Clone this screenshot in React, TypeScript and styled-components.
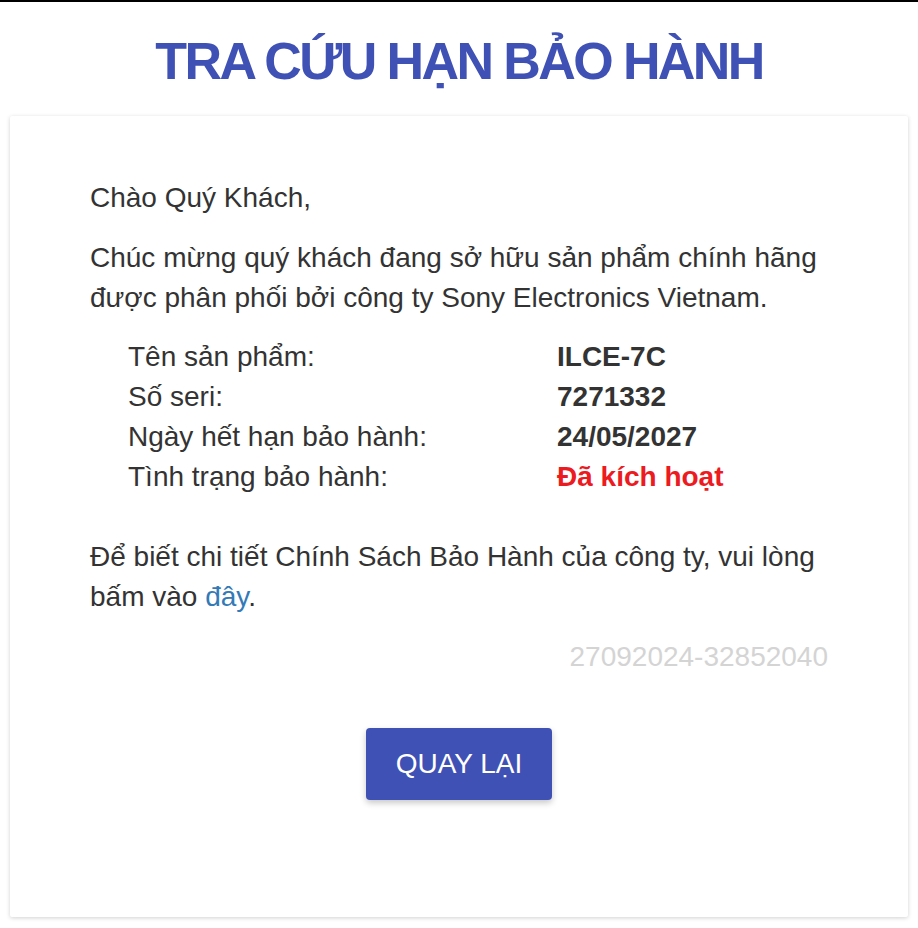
import React from "react";
import styled, { createGlobalStyle } from "styled-components";

const Global = createGlobalStyle`
  html, body { margin: 0; padding: 0; background: #fff; }
  body { font-family: "Liberation Sans", Arial, Helvetica, sans-serif; color: #333; }
`;

const Page = styled.div`
  border-top: 2px solid #000;
  padding: 0 10px 10px;
  display: flex;
  flex-direction: column;
`;

const Title = styled.h1`
  margin: 0;
  padding: 30px 0 26px;
  text-align: center;
  font-size: 52px;
  line-height: 58px;
  font-weight: 700;
  letter-spacing: -2.6px;
  color: #3f51b5;
`;

const Card = styled.div`
  background: #fff;
  box-shadow: 0 1px 4px rgba(0, 0, 0, 0.18);
  border-radius: 2px;
  padding: 62px 80px 0;
  height: 801px;
  box-sizing: border-box;
  display: flex;
  flex-direction: column;
`;

const Para = styled.p`
  margin: 0 0 20px;
  font-size: 28px;
  line-height: 40px;
`;

const InfoTable = styled.div`
  display: grid;
  grid-template-columns: 429px 1fr;
  padding-left: 38px;
  margin: -1px 0 40px;
  font-size: 28px;
  line-height: 40px;
`;

const Label = styled.div``;

const Value = styled.div<{ $red?: boolean }>`
  font-weight: 700;
  color: ${(p) => (p.$red ? "#ec1b1f" : "#333")};
`;

const Link = styled.a`
  color: #337ab7;
  text-decoration: none;
`;

const Code = styled.div`
  text-align: right;
  font-size: 28px;
  line-height: 40px;
  color: #d4d4d4;
`;

const ButtonRow = styled.div`
  display: flex;
  justify-content: center;
  margin-top: 51px;
`;

const Button = styled.button`
  width: 186px;
  height: 72px;
  border: none;
  border-radius: 4px;
  background: #3f51b5;
  color: #fff;
  font-family: "Liberation Sans", Arial, sans-serif;
  font-size: 28px;
  box-shadow: 0 3px 6px rgba(0, 0, 0, 0.22);
  cursor: pointer;
`;

export default function App() {
  return (
    <>
      <Global />
      <Page>
        <Title>TRA CỨU HẠN BẢO HÀNH</Title>
        <Card>
          <Para>Chào Quý Khách,</Para>
          <Para>
            Chúc mừng quý khách đang sở hữu sản phẩm chính hãng
            <br />
            được phân phối bởi công ty Sony Electronics Vietnam.
          </Para>
          <InfoTable>
            <Label>Tên sản phẩm:</Label>
            <Value>ILCE-7C</Value>
            <Label>Số seri:</Label>
            <Value>7271332</Value>
            <Label>Ngày hết hạn bảo hành:</Label>
            <Value>24/05/2027</Value>
            <Label>Tình trạng bảo hành:</Label>
            <Value $red>Đã kích hoạt</Value>
          </InfoTable>
          <Para>
            Để biết chi tiết Chính Sách Bảo Hành của công ty, vui lòng
            <br />
            bấm vào <Link href="#">đây</Link>.
          </Para>
          <Code>27092024-32852040</Code>
          <ButtonRow>
            <Button>QUAY LẠI</Button>
          </ButtonRow>
        </Card>
      </Page>
    </>
  );
}
